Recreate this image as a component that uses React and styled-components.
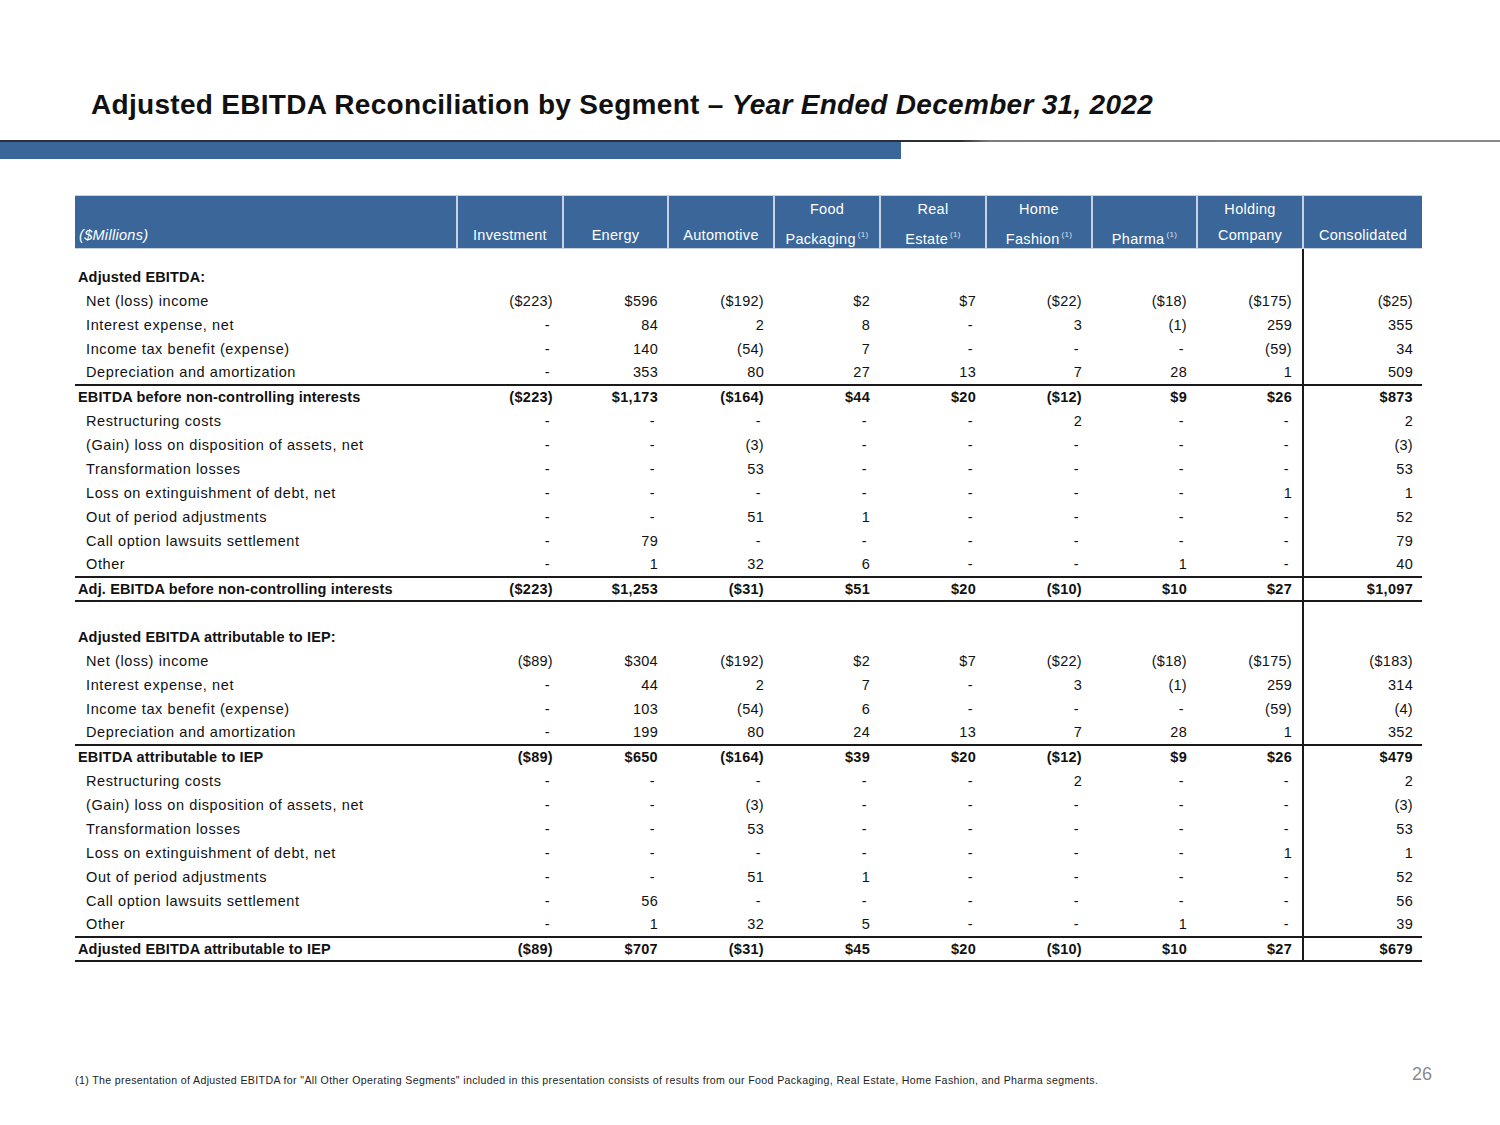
import React from 'react';
import styled, { createGlobalStyle } from 'styled-components';

const GlobalStyle = createGlobalStyle`
  html, body {
    margin: 0;
    padding: 0;
    background: #ffffff;
  }
  body {
    font-family: "Liberation Sans", Arial, sans-serif;
    color: #111;
  }
`;

const columns = [
  { top: '', bottom: 'Investment' },
  { top: '', bottom: 'Energy' },
  { top: '', bottom: 'Automotive' },
  { top: 'Food', bottom: 'Packaging', note: true },
  { top: 'Real', bottom: 'Estate', note: true },
  { top: 'Home', bottom: 'Fashion', note: true },
  { top: '', bottom: 'Pharma', note: true },
  { top: 'Holding', bottom: 'Company' },
  { top: '', bottom: 'Consolidated' },
];

const widths = [382, 106, 105, 106, 106, 106, 106, 105, 106, 119];

// kind: head = section title, item = indented line, total = bold total line
// rule: draw a line under the row
const sections = [
  [
    { kind: 'head', label: 'Adjusted EBITDA:' },
    { kind: 'item', label: 'Net (loss) income', v: ['($223)', '$596', '($192)', '$2', '$7', '($22)', '($18)', '($175)', '($25)'] },
    { kind: 'item', label: 'Interest expense, net', v: ['-', '84', '2', '8', '-', '3', '(1)', '259', '355'] },
    { kind: 'item', label: 'Income tax benefit (expense)', v: ['-', '140', '(54)', '7', '-', '-', '-', '(59)', '34'] },
    { kind: 'item', label: 'Depreciation and amortization', v: ['-', '353', '80', '27', '13', '7', '28', '1', '509'], rule: true },
    { kind: 'total', label: 'EBITDA before non-controlling interests', v: ['($223)', '$1,173', '($164)', '$44', '$20', '($12)', '$9', '$26', '$873'] },
    { kind: 'item', label: 'Restructuring costs', v: ['-', '-', '-', '-', '-', '2', '-', '-', '2'] },
    { kind: 'item', label: '(Gain) loss on disposition of assets, net', v: ['-', '-', '(3)', '-', '-', '-', '-', '-', '(3)'] },
    { kind: 'item', label: 'Transformation losses', v: ['-', '-', '53', '-', '-', '-', '-', '-', '53'] },
    { kind: 'item', label: 'Loss on extinguishment of debt, net', v: ['-', '-', '-', '-', '-', '-', '-', '1', '1'] },
    { kind: 'item', label: 'Out of period adjustments', v: ['-', '-', '51', '1', '-', '-', '-', '-', '52'] },
    { kind: 'item', label: 'Call option lawsuits settlement', v: ['-', '79', '-', '-', '-', '-', '-', '-', '79'] },
    { kind: 'item', label: 'Other', v: ['-', '1', '32', '6', '-', '-', '1', '-', '40'], rule: true },
    { kind: 'total', label: 'Adj. EBITDA before non-controlling interests', v: ['($223)', '$1,253', '($31)', '$51', '$20', '($10)', '$10', '$27', '$1,097'], rule: true },
  ],
  [
    { kind: 'head', label: 'Adjusted EBITDA attributable to IEP:' },
    { kind: 'item', label: 'Net (loss) income', v: ['($89)', '$304', '($192)', '$2', '$7', '($22)', '($18)', '($175)', '($183)'] },
    { kind: 'item', label: 'Interest expense, net', v: ['-', '44', '2', '7', '-', '3', '(1)', '259', '314'] },
    { kind: 'item', label: 'Income tax benefit (expense)', v: ['-', '103', '(54)', '6', '-', '-', '-', '(59)', '(4)'] },
    { kind: 'item', label: 'Depreciation and amortization', v: ['-', '199', '80', '24', '13', '7', '28', '1', '352'], rule: true },
    { kind: 'total', label: 'EBITDA attributable to IEP', v: ['($89)', '$650', '($164)', '$39', '$20', '($12)', '$9', '$26', '$479'] },
    { kind: 'item', label: 'Restructuring costs', v: ['-', '-', '-', '-', '-', '2', '-', '-', '2'] },
    { kind: 'item', label: '(Gain) loss on disposition of assets, net', v: ['-', '-', '(3)', '-', '-', '-', '-', '-', '(3)'] },
    { kind: 'item', label: 'Transformation losses', v: ['-', '-', '53', '-', '-', '-', '-', '-', '53'] },
    { kind: 'item', label: 'Loss on extinguishment of debt, net', v: ['-', '-', '-', '-', '-', '-', '-', '1', '1'] },
    { kind: 'item', label: 'Out of period adjustments', v: ['-', '-', '51', '1', '-', '-', '-', '-', '52'] },
    { kind: 'item', label: 'Call option lawsuits settlement', v: ['-', '56', '-', '-', '-', '-', '-', '-', '56'] },
    { kind: 'item', label: 'Other', v: ['-', '1', '32', '5', '-', '-', '1', '-', '39'], rule: true },
    { kind: 'total', label: 'Adjusted EBITDA attributable to IEP', v: ['($89)', '$707', '($31)', '$45', '$20', '($10)', '$10', '$27', '$679'], rule: true },
  ],
];

export default function App() {
  return (
    <>
      <GlobalStyle />
      <Page>
        <Title>
          Adjusted EBITDA Reconciliation by Segment – <em>Year Ended December 31, 2022</em>
        </Title>
        <Rule />
        <AccentBar />

        <TableWrap>
          <Table>
            <colgroup>
              {widths.map((w, i) => (
                <col key={i} style={{ width: w }} />
              ))}
            </colgroup>
            <thead>
              <tr>
                <HeadCell $first>
                  <HeadLine />
                  <HeadLine $italic>($Millions)</HeadLine>
                </HeadCell>
                {columns.map((c, i) => (
                  <HeadCell key={i}>
                    <HeadLine>{c.top}</HeadLine>
                    <HeadLine>
                      {c.bottom}
                      {c.note && <Sup>(1)</Sup>}
                    </HeadLine>
                  </HeadCell>
                ))}
              </tr>
            </thead>
            <tbody>
              <SpacerRow>
                <td colSpan={9} />
                <ConsolidatedCell />
              </SpacerRow>
              {sections.map((rows, si) => (
                <React.Fragment key={si}>
                  {si > 0 && (
                    <Row>
                      <td colSpan={9} />
                      <ConsolidatedCell />
                    </Row>
                  )}
                  {rows.map((r, ri) => (
                    <Row key={ri} $rule={r.rule}>
                      <LabelCell $kind={r.kind}>{r.label}</LabelCell>
                      {(r.v || Array(9).fill('')).map((val, ci) => {
                        const Cell = ci === 8 ? ConsolidatedCell : ValueCell;
                        return (
                          <Cell key={ci} $bold={r.kind === 'total'} $dash={val === '-'}>
                            {val}
                          </Cell>
                        );
                      })}
                    </Row>
                  ))}
                </React.Fragment>
              ))}
            </tbody>
          </Table>
        </TableWrap>

        <Footer>
          <Footnote>
            (1) The presentation of Adjusted EBITDA for "All Other Operating Segments" included in this presentation consists of results from our Food Packaging, Real Estate, Home Fashion, and Pharma segments.
          </Footnote>
          <PageNumber>26</PageNumber>
        </Footer>
      </Page>
    </>
  );
}

const Page = styled.div`
  width: 1500px;
  height: 1125px;
  display: flex;
  flex-direction: column;
  background: #ffffff;
  overflow: hidden;
`;

const Title = styled.h1`
  margin: 88px 0 0 91px;
  font-size: 28px;
  line-height: 34px;
  font-weight: 700;
  letter-spacing: 0.3px;
  color: #111;
  white-space: nowrap;

  em {
    font-style: italic;
  }
`;

const Rule = styled.div`
  margin-top: 18px;
  height: 2px;
  width: 100%;
  background: linear-gradient(to right, #2a2f3a 0%, #2a2f3a 64%, #7d7d7d 66%, #8a8a8a 100%);
`;

const AccentBar = styled.div`
  width: 901px;
  height: 17px;
  background: #3a6699;
`;

const TableWrap = styled.div`
  margin: 36px 0 0 75px;
`;

const Table = styled.table`
  border-collapse: collapse;
  table-layout: fixed;
  width: 1347px;
  font-size: 14.5px;
  letter-spacing: 0.3px;
`;

const HeadCell = styled.th`
  background: #3a6699;
  color: #ffffff;
  font-weight: 400;
  padding: 0 4px;
  text-align: ${(p) => (p.$first ? 'left' : 'center')};
  vertical-align: bottom;
  height: 52px;
  border-left: ${(p) => (p.$first ? '0' : '2px solid #c9d3df')};
  border-top: 1px solid #c9d3df;
  border-bottom: 1px solid #c9d3df;
  white-space: nowrap;
`;

const HeadLine = styled.div`
  height: 26px;
  line-height: 26px;
  font-style: ${(p) => (p.$italic ? 'italic' : 'normal')};
`;

const Sup = styled.sup`
  font-size: 8px;
  margin-left: 2px;
  vertical-align: 7px;
  color: #d8e0ea;
`;

const SpacerRow = styled.tr`
  height: 16px;
`;

const Row = styled.tr`
  height: 24px;
  border-bottom: ${(p) => (p.$rule ? '2px solid #1a1a1a' : '0')};
`;

const LabelCell = styled.td`
  padding: 0 0 0 ${(p) => (p.$kind === 'item' ? '11px' : '3px')};
  font-weight: ${(p) => (p.$kind === 'item' ? 400 : 700)};
  letter-spacing: ${(p) => (p.$kind === 'item' ? '0.6px' : '0.15px')};
  white-space: nowrap;
  line-height: 22px;
`;

const ValueCell = styled.td`
  text-align: right;
  padding: 0 ${(p) => (p.$dash ? '13px' : '10px')} 0 0;
  font-weight: ${(p) => (p.$bold ? 700 : 400)};
  white-space: nowrap;
  line-height: 22px;
`;

const ConsolidatedCell = styled(ValueCell)`
  border-left: 2px solid #1a1a1a;
  padding-right: ${(p) => (p.$dash ? '12px' : '9px')};
`;

const Footer = styled.div`
  margin-top: auto;
  display: flex;
  justify-content: space-between;
  align-items: flex-end;
  padding: 0 68px 39px 75px;
`;

const Footnote = styled.div`
  font-size: 10.6px;
  color: #222;
  letter-spacing: 0.36px;
  white-space: nowrap;
`;

const PageNumber = styled.div`
  font-size: 18px;
  color: #8a8a8a;
  line-height: 18px;
  margin-bottom: 3px;
`;
